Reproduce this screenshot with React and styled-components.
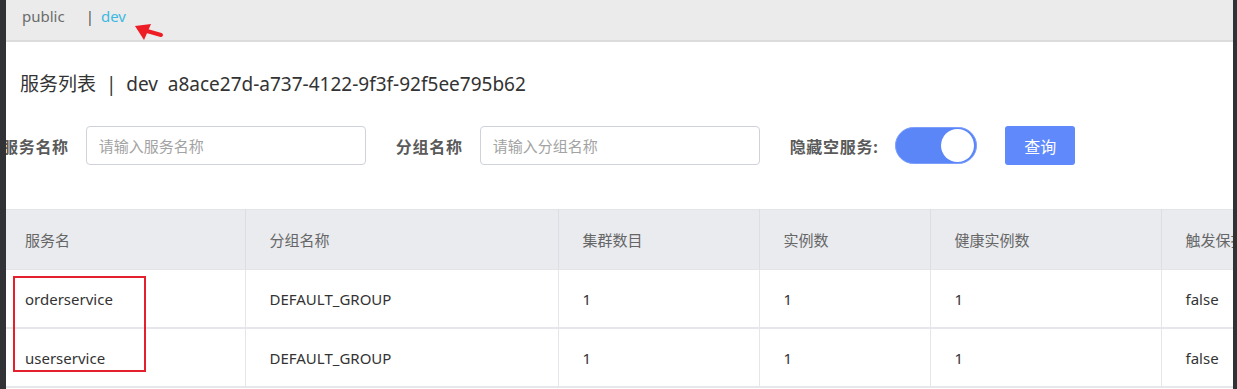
import React from 'react';
import styled, { createGlobalStyle } from 'styled-components';

const GlobalStyle = createGlobalStyle`
    html, body {
        margin: 0;
        padding: 0;
        background: #fff;
        font-family: "Noto Sans", "Noto Sans CJK SC", sans-serif;
    }
`;

const services = [
    { name: 'orderservice', group: 'DEFAULT_GROUP', clusters: 1, instances: 1, healthy: 1, protect: 'false' },
    { name: 'userservice', group: 'DEFAULT_GROUP', clusters: 1, instances: 1, healthy: 1, protect: 'false' },
];

const columns = [
    { title: '服务名', width: 244 },
    { title: '分组名称', width: 313 },
    { title: '集群数目', width: 201 },
    { title: '实例数', width: 171 },
    { title: '健康实例数', width: 231 },
    { title: '触发保护阈值', width: 200 },
];

const App = () => {
    return (
        <Page>
            <GlobalStyle />
            <SideEdge />
            <Main>
                <TabBar>
                    <Tab>public</Tab>
                    <TabSep>|</TabSep>
                    <Tab active>dev</Tab>
                    <Arrow width="30" height="24" viewBox="0 0 30 24">
                        <path d="M12 12 L26 16" stroke="#ee1c25" strokeWidth="4" strokeLinecap="round" />
                        <path d="M0 7 L16 5 L9 21 Z" fill="#ee1c25" />
                    </Arrow>
                </TabBar>
                <Content>
                    <Title>服务列表 &nbsp;|&nbsp; dev &nbsp;a8ace27d-a737-4122-9f3f-92f5ee795b62</Title>
                    <SearchRow>
                        <Label>服务名称</Label>
                        <Input placeholder="请输入服务名称" />
                        <Label>分组名称</Label>
                        <Input placeholder="请输入分组名称" />
                        <Label>隐藏空服务:</Label>
                        <Switch><Knob /></Switch>
                        <QueryButton>查询</QueryButton>
                    </SearchRow>
                    <TableWrap>
                        <Table>
                            <colgroup>
                                {columns.map((c) => <col key={c.title} style={{ width: c.width }} />)}
                            </colgroup>
                            <thead>
                                <tr>
                                    {columns.map((c) => <Th key={c.title}>{c.title}</Th>)}
                                </tr>
                            </thead>
                            <tbody>
                                {services.map((s) => (
                                    <tr key={s.name}>
                                        <Td>{s.name}</Td>
                                        <Td>{s.group}</Td>
                                        <Td>{s.clusters}</Td>
                                        <Td>{s.instances}</Td>
                                        <Td>{s.healthy}</Td>
                                        <Td>{s.protect}</Td>
                                    </tr>
                                ))}
                            </tbody>
                        </Table>
                        <Highlight />
                    </TableWrap>
                </Content>
            </Main>
            <SideEdge narrow />
        </Page>
    );
}

export default App;

const Page = styled.div`
    display: flex;
    width: 1237px;
    height: 389px;
    overflow: hidden;
`;

const SideEdge = styled.div`
    flex: 0 0 ${(p) => (p.narrow ? '4px' : '6px')};
    background: #303236;
`;

const Main = styled.div`
    flex: 1;
    min-width: 0;
    overflow: hidden;
    background: #fff;
`;

const TabBar = styled.div`
    position: relative;
    display: flex;
    align-items: center;
    height: 40px;
    padding: 0 0 0 16px;
    background: #ebebeb;
    border-bottom: 2px solid #dcdcdc;
    box-sizing: content-box;
`;

const Tab = styled.span`
    font-size: 15px;
    color: ${(p) => (p.active ? '#3cb9e1' : '#6b6b6b')};
    margin-top: -9px;
`;

const TabSep = styled.span`
    font-size: 15px;
    color: #555;
    margin: -9px 7px 0 21px;
`;

const Arrow = styled.svg`
    position: absolute;
    left: 129px;
    top: 19px;
    overflow: visible;
`;

const Content = styled.div`
    margin-left: -5px;
`;

const Title = styled.h1`
    margin: 0;
    padding: 29px 0 0 19px;
    height: 55px;
    box-sizing: border-box;
    font-size: 19px;
    font-weight: 400;
    line-height: 26px;
    color: #333;
`;

const SearchRow = styled.div`
    display: flex;
    align-items: center;
    height: 39px;
    margin-top: 29px;
    padding-left: 1px;
`;

const Label = styled.span`
    font-size: 16px;
    font-weight: 700;
    letter-spacing: 0.7px;
    color: #5a5a5a;
    margin-right: 17px;
    white-space: nowrap;
    & + input {
        margin-right: 30px;
    }
`;

const Input = styled.input`
    box-sizing: border-box;
    width: 280px;
    height: 39px;
    padding: 0 12px;
    border: 1px solid #cfd2da;
    border-radius: 4px;
    font-family: "Noto Sans", "Noto Sans CJK SC", sans-serif;
    font-size: 15px;
    color: #333;
    outline: none;
    &::placeholder {
        color: #a3a3a3;
    }
`;

const Switch = styled.div`
    display: flex;
    justify-content: flex-end;
    align-items: center;
    box-sizing: border-box;
    width: 82px;
    height: 37px;
    padding: 0 2px;
    margin-right: 28px;
    border-radius: 19px;
    background: #5b86f8;
    border: 1px solid #7d9ffb;
`;

const Knob = styled.span`
    width: 33px;
    height: 33px;
    border-radius: 50%;
    background: #fff;
`;

const QueryButton = styled.button`
    width: 70px;
    height: 39px;
    border: none;
    border-radius: 3px;
    background: #6089fc;
    color: #fff;
    font-family: "Noto Sans", "Noto Sans CJK SC", sans-serif;
    font-size: 16px;
`;

const TableWrap = styled.div`
    position: relative;
    margin-top: 44px;
`;

const Table = styled.table`
    table-layout: fixed;
    width: 1360px;
    border-collapse: collapse;
    border-top: 1px solid #e2e4e8;
`;

const Th = styled.th`
    height: 59px;
    padding: 0 0 0 24px;
    text-align: left;
    font-size: 15px;
    font-weight: 400;
    color: #666;
    background: #e9ebef;
    border-right: 1px solid #dcdee3;
    border-bottom: 1px solid #e2e4e8;
    white-space: nowrap;
    overflow: hidden;
`;

const Td = styled.td`
    height: 57px;
    padding: 0 0 0 24px;
    font-size: 15px;
    color: #333;
    border-right: 1px solid #e4e6ea;
    border-bottom: 2px solid #e6e7eb;
    white-space: nowrap;
`;

const Highlight = styled.div`
    position: absolute;
    left: 12px;
    top: 67px;
    width: 129px;
    height: 92px;
    border: 2px solid #e4202c;
`;
